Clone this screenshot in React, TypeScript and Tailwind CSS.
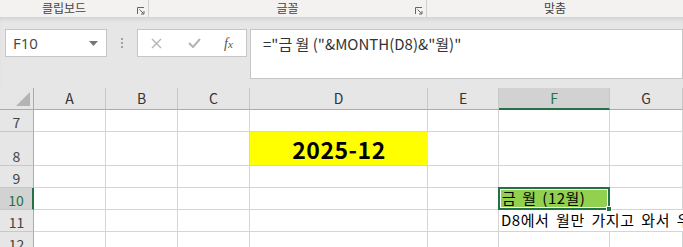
import React from "react";

const cols = ["A", "B", "C", "D", "E", "F", "G"];
const font = { fontFamily: '"Noto Sans CJK KR", "Noto Sans", sans-serif' };

function Cell({ className = "", children }: { className?: string; children?: React.ReactNode }) {
  return <div className={`border-r border-b border-[#d4d4d4] ${className}`}>{children}</div>;
}

function RowHead({ n, active }: { n: number; active?: boolean }) {
  return (
    <div
      className={`flex items-end justify-center pb-[2px] border-b border-[#c8c8c8] text-[14px] leading-none ${
        active ? "bg-[#d2d2d2] text-[#217346] border-r-2 border-r-[#217346]" : "bg-[#e6e6e6] text-[#444] border-r border-r-[#ababab]"
      }`}
    >
      {n}
    </div>
  );
}

// small dialog launcher in the ribbon group label
function Launcher() {
  return (
    <svg className="absolute right-[3px] top-[7px]" width="8" height="8" viewBox="0 0 8 8">
      <path d="M0.5 7V0.5H7" stroke="#666" fill="none" />
      <path d="M2.5 2.5L7 7M7 4v3H4" stroke="#666" fill="none" />
    </svg>
  );
}

export default function App() {
  return (
    <div className="w-[683px] h-[247px] overflow-hidden bg-white text-[#222]" style={font}>
      {/* ribbon group labels */}
      <div className="relative h-[17px] bg-[#f3f2f1] flex text-[12px] text-[#444] leading-[16px]">
        <div className="w-[149px] border-r border-[#d0d0d0] relative flex justify-center pr-[20px]">
          클립보드
          <Launcher />
        </div>
        <div className="w-[278px] border-r border-[#d0d0d0] relative flex justify-center">
          글꼴
          <Launcher />
        </div>
        <div className="flex-1 flex justify-center">맞춤</div>
      </div>

      {/* formula bar */}
      <div className="h-[72px] bg-[#e6e6e6] shadow-[inset_0_4px_4px_-2px_#cfcfcf] pt-[12px] flex items-start">
        <div className="ml-[5px] w-[102px] h-[28px] bg-white border border-[#c6c6c6] flex items-center justify-between pl-[7px] pr-[8px]">
          <span className="text-[15px] text-[#444]" style={{ fontFamily: '"Open Sans", sans-serif' }}>F10</span>
          <svg width="9" height="5" viewBox="0 0 9 5"><path d="M0 0h9L4.5 5z" fill="#777" /></svg>
        </div>
        <div className="w-[30px] h-[28px] flex flex-col items-center justify-center gap-[2px]">
          <span className="w-[2px] h-[2px] bg-[#a0a0a0]" />
          <span className="w-[2px] h-[2px] bg-[#a0a0a0]" />
          <span className="w-[2px] h-[2px] bg-[#a0a0a0]" />
        </div>
        <div className="w-[110px] h-[28px] bg-white border border-[#c6c6c6] flex items-center">
          <svg className="ml-[13px]" width="11" height="11" viewBox="0 0 11 11">
            <path d="M1 1l9 9M10 1l-9 9" stroke="#b4b4b4" strokeWidth="1.4" />
          </svg>
          <svg className="ml-[26px]" width="13" height="10" viewBox="0 0 13 10">
            <path d="M1 5l4 4 7-8" stroke="#b4b4b4" strokeWidth="2" fill="none" />
          </svg>
          <span className="ml-[23px] italic text-[14px] text-[#555]" style={{ fontFamily: '"Liberation Serif", serif' }}>
            f<span className="text-[11px]">x</span>
          </span>
        </div>
        <div className="ml-[3px] flex-1 h-[50px] bg-white border border-[#c6c6c6] pl-[12px] pt-[3px] text-[15px] text-[#333]">
          ="금 월 ("&amp;MONTH(D8)&amp;"월)"
        </div>
      </div>

      {/* grid */}
      <div className="grid grid-cols-[34px_72px_72px_72px_178px_71px_111px_1fr] grid-rows-[22px_22px_34px_22px_22px_22px_22px] -mt-[1px]">
        {/* header row */}
        <div className="bg-[#e6e6e6] border-r border-r-[#ababab] border-b border-b-[#ababab] relative">
          <svg className="absolute right-[3px] bottom-[3px]" width="14" height="14" viewBox="0 0 14 14">
            <path d="M14 0V14H0z" fill="#b4b4b4" />
          </svg>
        </div>
        {cols.map((c) => (
          <div
            key={c}
            className={`flex items-center justify-center text-[14px] ${
              c === "F"
                ? "bg-[#d2d2d2] text-[#217346] border-b-2 border-b-[#217346] border-r border-r-[#c8c8c8]"
                : "bg-[#e6e6e6] text-[#333] border-b border-b-[#ababab] border-r border-r-[#c8c8c8]"
            }`}
          >
            {c}
          </div>
        ))}

        {/* row 7 */}
        <RowHead n={7} />
        {cols.map((c) => <Cell key={c} />)}

        {/* row 8 */}
        <RowHead n={8} />
        <Cell />
        <Cell />
        <Cell />
        <div className="bg-[#ffff00] border-b border-[#d4d4d4] flex items-end justify-center pb-[1px] text-[23px] tracking-[0.5px] font-bold text-black leading-[30px]">
          2025-12
        </div>
        <Cell />
        <Cell />
        <Cell />

        {/* row 9 */}
        <RowHead n={9} />
        {cols.map((c) => <Cell key={c} />)}

        {/* row 10 */}
        <RowHead n={10} active />
        <Cell />
        <Cell />
        <Cell />
        <Cell />
        <Cell />
        <div className="relative -mt-[1px] -ml-[1px] h-[23px] border-2 border-[#217346] bg-[#92d050]">
          <div className="h-full border border-white flex items-center pl-[1px] text-[15px] tracking-[0.5px] [word-spacing:2px] text-black whitespace-nowrap">
            금 월 (12월)
          </div>
          <span className="absolute -right-[4px] -bottom-[4px] w-[6px] h-[6px] bg-[#217346] border border-white" />
        </div>
        <Cell />

        {/* row 11 */}
        <RowHead n={11} />
        <Cell />
        <Cell />
        <Cell />
        <Cell />
        <Cell />
        <div className="col-span-2 border-b border-[#d4d4d4] flex items-center pl-[2px] text-[15px] tracking-[0.5px] [word-spacing:3px] text-black whitespace-nowrap overflow-hidden">
          D8에서 월만 가지고 와서 우리가
        </div>

        {/* row 12 */}
        <RowHead n={12} />
        {cols.map((c) => <Cell key={c} />)}
      </div>
    </div>
  );
}
